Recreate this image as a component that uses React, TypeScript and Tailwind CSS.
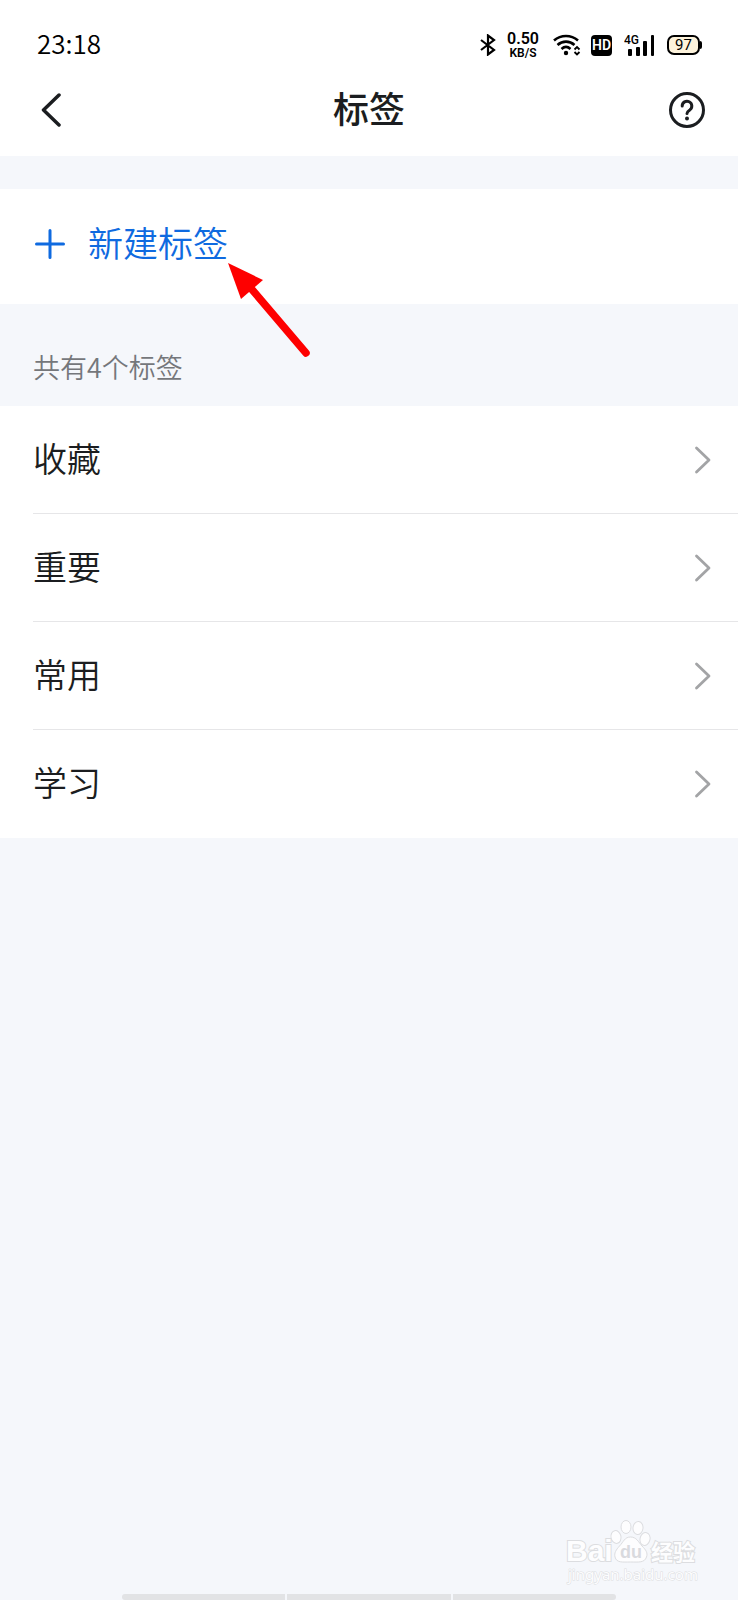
import React from "react";

const tags = ["收藏", "重要", "常用", "学习"];

const StatusIcons: React.FC = () => {
  return (
    <div className="flex items-center text-black">
      {/* Bluetooth */}
      <svg className="w-4 h-[22px]" viewBox="0 0 16 22" fill="none" stroke="currentColor" strokeWidth="2.200" aria-hidden="true">
        <path d="M1 6l13 10-6 4.500v-19L14 6 1 16" />
      </svg>

      <div className="ml-[10px] w-[34px] text-center font-semibold">
        <p className="text-[16px] leading-4">0.50</p>
        <p className="text-[12px] leading-3">KB/S</p>
      </div>

      {/* Wifi */}
      <svg className="ml-[13px] w-[28px] h-[22px]" viewBox="0 0 28 22" fill="none" stroke="currentColor" aria-hidden="true">
        <path d="M1 6.500C8 .5 18 .5 25 6.500" strokeWidth="2.600" />
        <path d="M4.500 11C9.500 6.500 16.500 6.500 21.500 11" strokeWidth="2.600" />
        <path d="M8.500 15C11.500 12.300 14.500 12.300 17.500 15" strokeWidth="2.600" />
        <circle cx="13" cy="19" r="2.200" fill="currentColor" stroke="none" />
        <path d="M21.500 15.500l2.500-2.500 2.500 2.500M21.500 18l2.500 2.500 2.500-2.500" strokeWidth="1.800" />
      </svg>

      <span className="ml-[10px] w-[21px] h-[21px] rounded-[4px] bg-black text-white text-[14px] leading-[21px] font-semibold text-center">
        HD
      </span>

      {/* Signal */}
      <svg className="ml-[12px] w-[31px] h-[22px]" viewBox="0 0 31 22" fill="currentColor" aria-hidden="true">
        <text x="0" y="10" className="text-[12px] font-medium">4G</text>
        <rect x="4" y="15" width="4" height="7" rx="1" />
        <rect x="12" y="13" width="4" height="9" rx="1" />
        <rect x="19" y="7" width="4" height="15" rx="1" />
        <rect x="27" y="1" width="3" height="21" rx="1" />
      </svg>

      <span className="ml-[12px] w-[33px] h-5 rounded-[7px] border-2 border-black bg-[#fdf3dc] text-[15px] leading-4 text-center">
        97
      </span>
      <span className="w-[2px] h-[8px] rounded-r-sm bg-black"></span>
    </div>
  );
};

const Watermark: React.FC = () => {
  return (
    <svg
      className="absolute right-[38px] bottom-[14px] w-[136px] h-[68px]"
      viewBox="0 0 136 68"
      fill="#fdfdfe"
      stroke="#dcdde0"
      strokeWidth="1"
      aria-label="Baidu 经验"
    >
      <g strokeWidth="2" paintOrder="stroke" fontWeight="700">
        <text x="2" y="43" fontSize="30" fontFamily="'Liberation Sans', sans-serif">Bai</text>
        <text x="87" y="42" fontSize="22" fontFamily="'Noto Sans CJK SC', sans-serif">经验</text>
      </g>
      <ellipse cx="52" cy="19" rx="5" ry="6.500" transform="rotate(-12 52 19)" />
      <ellipse cx="62" cy="9" rx="5" ry="6.500" />
      <ellipse cx="74" cy="10" rx="5" ry="6.500" transform="rotate(8 74 10)" />
      <ellipse cx="81" cy="21" rx="5" ry="6.500" transform="rotate(14 81 21)" />
      <path d="M66.500 19c6 0 8 5 11.500 9 4 4 6 7 4.500 11-2 6-8 5-16 5s-14 1-15.500-5c-1-4 1-7 4.500-11 4-4 5-9 11-9z" />
      <text x="56" y="40" fontSize="18" fontWeight="700" fontFamily="'Liberation Sans', sans-serif" fill="#d9dade" stroke="none">
        du
      </text>
      <text x="4" y="62" fontSize="15" paintOrder="stroke" fontFamily="'Noto Sans', sans-serif">
        jingyan.baidu.com
      </text>
    </svg>
  );
};

export default function App() {
  return (
    <div className="relative flex flex-col min-h-screen bg-[#f5f7fb] text-[#1b1d20] font-['Noto_Sans_CJK_SC',sans-serif]">
      <header className="bg-white">
        <div className="flex items-center justify-between h-16 pt-[26px] pl-[37px] pr-9 font-['Roboto',sans-serif]">
          <span className="font-['Noto_Sans_CJK_SC',sans-serif] text-[26px] leading-8 pb-1 font-[350] text-black">23:18</span>
          <StatusIcons />
        </div>
        <div className="grid grid-cols-[1fr_auto_1fr] items-center h-[92px] px-8">
          <button className="justify-self-start pl-[9px] cursor-pointer" aria-label="返回">
            <svg className="w-[22px] h-[34px]" viewBox="0 0 22 34" fill="none" stroke="currentColor" strokeWidth="3.500" strokeLinecap="round" strokeLinejoin="round">
              <path d="M18 2L2.500 17 18 32" />
            </svg>
          </button>
          <h1 className="text-[36px] leading-[48px] font-medium pb-[6px]">标签</h1>
          <button className="justify-self-end cursor-pointer" aria-label="帮助">
            <svg className="w-[38px] h-[38px]" viewBox="0 0 38 38" fill="none" stroke="currentColor" strokeWidth="3" strokeLinecap="round">
              <circle cx="19" cy="19" r="16.500" />
              <path d="M14.200 15a4.800 4.800 0 1 1 7.600 3.900c-1.800 1.200-2.800 2-2.800 3.600" />
              <circle cx="19" cy="27.500" r="2" fill="currentColor" stroke="none" />
            </svg>
          </button>
        </div>
      </header>

      <main className="pt-[33px]">
        <div className="relative">
          <button className="flex items-center gap-[23px] w-full h-[115px] px-[35px] pb-[6px] bg-white text-[#0f6ae0] cursor-pointer">
            <svg className="w-[30px] h-[30px]" viewBox="0 0 30 30" stroke="currentColor" strokeWidth="3" strokeLinecap="round" aria-hidden="true">
              <path d="M15 1.500v27M1.500 15h27" />
            </svg>
            <span className="text-[35px] leading-[48px] pb-1 font-[350]">新建标签</span>
          </button>
          <svg className="absolute left-[227px] top-[73px] w-[84px] h-[96px]" viewBox="0 0 84 96" fill="#fe0000" aria-hidden="true">
            <path d="M1 1l35 17-22 19z" />
            <path d="M22 24l57 67" stroke="#fe0000" strokeWidth="7.500" strokeLinecap="round" />
          </svg>
        </div>

        <h2 className="h-[102px] pt-[43px] px-[33px] text-[27px] leading-10 font-[350] text-[#75777b]">共有4个标签</h2>

        <ul className="bg-white pl-[33px]">
          {tags.map((tag) => (
            <li key={tag} className="border-b border-[#e6e6e8] last:border-white">
              <a href="#" className="flex items-center justify-between h-[107px] pr-[27px]">
                <span className="text-[34px] leading-[48px] pb-1 font-[350]">{tag}</span>
                <svg className="w-[17px] h-[28px]" viewBox="0 0 17 28" fill="none" stroke="#a3a4a6" strokeWidth="2.800" strokeLinecap="round" strokeLinejoin="round" aria-hidden="true">
                  <path d="M2.500 2L15 14 2.500 26" />
                </svg>
              </a>
            </li>
          ))}
        </ul>
      </main>

      <Watermark />

      {/* Navigation gesture bar */}
      <div className="flex gap-[2px] mt-auto h-[6px] px-[122px]">
        <span className="flex-1 rounded-l-sm bg-[#e2e3e5]"></span>
        <span className="flex-1 bg-[#e2e3e5]"></span>
        <span className="flex-1 rounded-r-sm bg-[#e2e3e5]"></span>
      </div>
    </div>
  );
}
